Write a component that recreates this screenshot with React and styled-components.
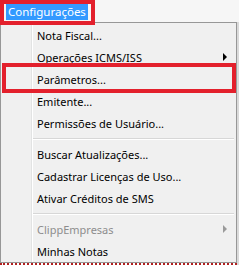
import styled, { createGlobalStyle } from "styled-components";

const GlobalStyle = createGlobalStyle`
  html, body {
    margin: 0;
    padding: 0;
    background: #f4f4f4;
  }
  body {
    font-family: "Noto Sans", "Open Sans", sans-serif;
    font-size: 11px;
  }
`;

const Page = styled.div`
  width: 239px;
  height: 265px;
  overflow: hidden;
  display: flex;
  flex-direction: column;
  background: linear-gradient(to right, #f4f4f4 237px, #dadada 237px);
`;

const MenuBar = styled.div`
  height: 22px;
  display: flex;
  align-items: flex-start;
  background: #f6f6f6;
`;

const TopItem = styled.div`
  position: relative;
  z-index: 2;
  width: 95px;
  height: 25px;
  box-sizing: border-box;
  border: 4px solid #e3202c;
  padding: 0 0 1px 2px;
  background: #f6f6f6;
`;

const TopLabel = styled.div`
  height: 16px;
  width: 80px;
  background: #3399ff;
  color: #fff;
  line-height: 16px;
  padding-left: 2px;
  font-size: 11.5px;
`;

const Menu = styled.div`
  width: 237px;
  box-sizing: border-box;
  border: 1px solid #979797;
  padding: 1px 0 0 0;
  background: linear-gradient(
    to right,
    #f0f0f0 30px,
    #e2e3e3 30px 31px,
    #ffffff 31px 32px,
    #f0f0f0 32px
  );
`;

const Item = styled.div`
  position: relative;
  height: 22px;
  display: flex;
  align-items: center;
  padding-left: 36px;
  padding-right: 9px;
  font-size: 11px;
  color: ${(p) => (p.$disabled ? "#8d8d8d" : "#000")};

  ${(p) =>
    p.$marked &&
    `
    &::after {
      content: "";
      position: absolute;
      left: 1px;
      right: 0;
      top: -5px;
      bottom: -3px;
      border: 4px solid #e3202c;
    }
  `}
`;

const Label = styled.span`
  flex: 1;
`;

const Arrow = styled.span`
  width: 0;
  height: 0;
  border-top: 4px solid transparent;
  border-bottom: 4px solid transparent;
  border-left: 4px solid ${(p) => (p.$disabled ? "#9a9a9a" : "#000")};
`;

const Separator = styled.div`
  height: 9px;
  display: flex;
  align-items: center;
  padding-left: 32px;
  padding-right: 2px;

  &::before {
    content: "";
    flex: 1;
    height: 1px;
    border-top: 1px solid #d7d7d7;
    background: #fff;
  }
`;

const Footer = styled.div`
  flex: 1;
  border-top: 2px dotted #b02020;
  margin-right: 2px;
  background: #fff;
`;

const groups = [
  [
    { label: "Nota Fiscal..." },
    { label: "Operações ICMS/ISS", sub: true },
    { label: "Parâmetros...", marked: true },
    { label: "Emitente..." },
    { label: "Permissões de Usuário..." },
  ],
  [
    { label: "Buscar Atualizações..." },
    { label: "Cadastrar Licenças de Uso..." },
    { label: "Ativar Créditos de SMS" },
  ],
  [
    { label: "ClippEmpresas", sub: true, disabled: true },
    { label: "Minhas Notas" },
  ],
];

export default function App() {
  return (
    <Page>
      <GlobalStyle />
      <MenuBar>
        <TopItem>
          <TopLabel>Configurações</TopLabel>
        </TopItem>
      </MenuBar>
      <Menu>
        {groups.map((items, gi) => (
          <div key={gi}>
            {gi > 0 && <Separator />}
            {items.map((it) => (
              <Item key={it.label} $marked={it.marked} $disabled={it.disabled}>
                <Label>{it.label}</Label>
                {it.sub && <Arrow $disabled={it.disabled} />}
              </Item>
            ))}
          </div>
        ))}
      </Menu>
      <Footer />
    </Page>
  );
}
